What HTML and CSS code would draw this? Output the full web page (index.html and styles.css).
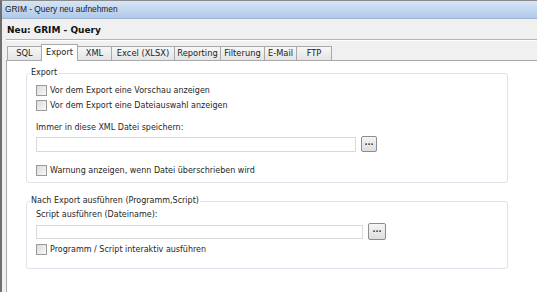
FILE: index.html
```html
<!DOCTYPE html>
<html lang="de">
<head>
  <meta charset="UTF-8">
  <title>GRIM - Query neu aufnehmen</title>
  <link rel="stylesheet" href="styles.css">
</head>
<body>

  <div class="window">
    <div class="titlebar">GRIM - Query neu aufnehmen</div>

    <div class="content">
      <div class="heading">Neu: GRIM - Query</div>

      <div class="tabs">
        <div class="tab tab-sql">SQL</div>
        <div class="tab active tab-export">Export</div>
        <div class="tab tab-xml">XML</div>
        <div class="tab tab-excel">Excel (XLSX)</div>
        <div class="tab tab-reporting">Reporting</div>
        <div class="tab tab-filter">Filterung</div>
        <div class="tab tab-mail">E-Mail</div>
        <div class="tab tab-ftp">FTP</div>
      </div>

      <div class="panel">
        <fieldset class="group group-export">
          <legend>Export</legend>
          <label class="check"><span class="box"></span>Vor dem Export eine Vorschau anzeigen</label>
          <label class="check"><span class="box"></span>Vor dem Export eine Dateiauswahl anzeigen</label>
          <div class="field-label">Immer in diese XML Datei speichern:</div>
          <div class="file-row">
            <div class="input"></div>
            <button class="browse">...</button>
          </div>
          <label class="check check-last"><span class="box"></span>Warnung anzeigen, wenn Datei überschrieben wird</label>
        </fieldset>

        <fieldset class="group group-script">
          <legend>Nach Export ausführen (Programm,Script)</legend>
          <div class="field-label">Script ausführen (Dateiname):</div>
          <div class="file-row">
            <div class="input"></div>
            <button class="browse">...</button>
          </div>
          <label class="check"><span class="box"></span>Programm / Script interaktiv ausführen</label>
        </fieldset>
      </div>
    </div>
  </div>

</body>
</html>
```

FILE: styles.css
```css
    html, body {
      margin: 0;
      height: 100%;
    }

    body {
      font-family: 'DejaVu Sans', Verdana, sans-serif;
      font-size: 8px;
      color: #262626;
      background: #f0f0f0;
    }

    .window {
      height: 100vh;
      display: flex;
      flex-direction: column;
      border-left: 2px solid #6f6f6f;
      border-top: 1px solid #8a8a8a;
      box-sizing: border-box;
    }

    .titlebar {
      height: 17px;
      line-height: 17px;
      padding-left: 3px;
      font-family: 'Liberation Sans', Arial, sans-serif;
      font-size: 8.4px;
      color: #1a1a1a;
      background: linear-gradient(#d6e5f6, #afc9ea);
      border-bottom: 1px solid #9fb6d3;
    }

    .content {
      flex: 1;
      display: flex;
      flex-direction: column;
      padding-left: 4px;
    }

    .heading {
      height: 20px;
      line-height: 22px;
      padding-left: 1px;
      font-size: 9px;
      font-weight: bold;
      color: #111;
      border-bottom: 1px solid #b4b4b4;
      box-shadow: 0 1px 0 #ffffff;
    }

    .tabs {
      display: flex;
      align-items: flex-end;
      height: 20px;
      padding-left: 1px;
      font-size: 8.3px;
    }

    .tab {
      height: 13px;
      line-height: 13px;
      text-align: center;
      background: linear-gradient(#f7f7f7, #e4e4e4);
      border: 1px solid #a9a9a9;
      border-bottom: none;
      margin-right: -1px;
      color: #222;
    }

    .tab.active {
      height: 16px;
      line-height: 14px;
      background: #ffffff;
      position: relative;
      z-index: 1;
      margin-bottom: -1px;
    }

    .tab-sql { width: 33px; }
    .tab-export { width: 35px; }
    .tab-xml { width: 33px; }
    .tab-excel { width: 62px; }
    .tab-reporting { width: 45px; }
    .tab-filter { width: 43px; }
    .tab-mail { width: 31px; }
    .tab-ftp { width: 34px; }

    .panel {
      flex: 1;
      background: #ffffff;
      border-left: 1px solid #a9a9a9;
      border-top: 1px solid #a9a9a9;
      padding: 6px 29px 0 19px;
    }

    .group {
      margin: 0;
      padding: 4px 9px 4px 9px;
      border: 1px solid #dce3ea;
      border-radius: 3px;
    }

    .group legend {
      padding: 0 1px;
      margin-left: -6px;
      line-height: 12px;
    }

    .group-script {
      margin-top: 12px;
      padding-top: 2px;
      padding-bottom: 11px;
    }

    .check {
      display: flex;
      align-items: center;
      height: 15px;
    }

    .check-last {
      margin-top: 11px;
    }

    .group-script .check {
      margin-top: 2px;
    }

    .box {
      width: 9px;
      height: 9px;
      margin-right: 3px;
      border: 1px solid #9a9a9a;
      background: linear-gradient(135deg, #dcdcdc, #f8f8f8);
    }

    .field-label {
      height: 12px;
      line-height: 12px;
      margin-top: 9px;
    }

    .group-script .field-label {
      margin-top: 0;
    }

    .file-row {
      display: flex;
      align-items: center;
      margin-top: 2px;
    }

    .input {
      width: 318px;
      height: 13px;
      border: 1px solid #d9d9d9;
      background: #ffffff;
    }

    .group-script .input {
      width: 325px;
      height: 12px;
    }

    .browse {
      width: 16px;
      height: 16px;
      margin-left: 5px;
      padding: 0 0 3px 0;
      font-family: 'DejaVu Sans', sans-serif;
      font-size: 8px;
      font-weight: bold;
      line-height: 8px;
      color: #333;
      border: 1px solid #8d8d8d;
      border-radius: 2px;
      background: linear-gradient(#f4f4f4, #dedede);
    }

    .group-script .browse {
      width: 18px;
      height: 17px;
      margin-left: 5px;
    }
```
